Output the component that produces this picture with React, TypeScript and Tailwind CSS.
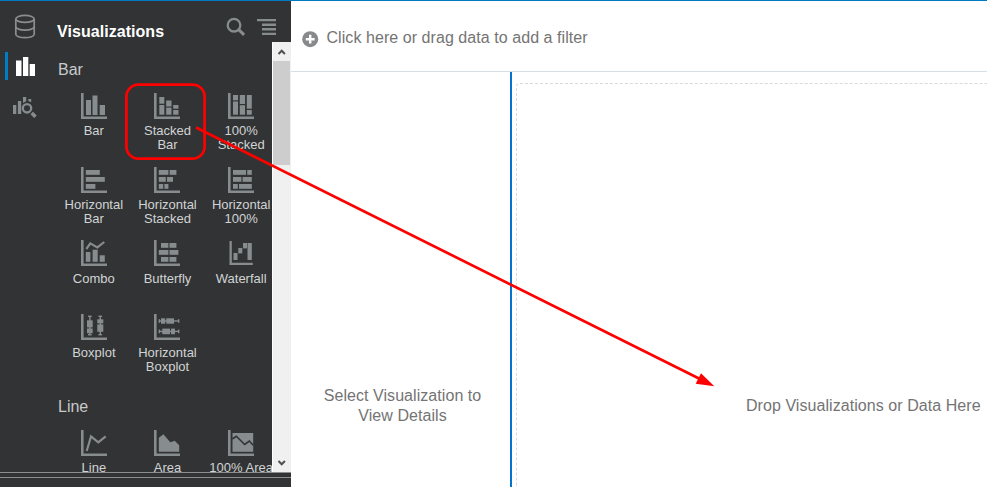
import React from "react";

type Rect = [number, number, number, number];

interface Viz {
  label: string[];
  bars?: Rect[];
  line?: string;
  area?: string;
  cut?: string;
  small?: boolean;
}

// Each bar is [left, top, right, bottom] in a 26-unit square.
const barCharts: Viz[] = [
  { label: ["Bar"], bars: [[5, 7, 10, 22], [11.5, 2.5, 16.5, 22], [18.7, 12, 24, 22]] },
  {
    label: ["Stacked", "Bar"],
    bars: [[5.3, 4, 10.3, 10.7], [5.3, 12, 10.3, 21.7], [12.2, 7.5, 17.5, 13.5], [12.2, 14.6, 17.5, 21.7], [19.2, 12, 24.5, 15.7], [19.2, 17, 24.5, 21.7]],
  },
  {
    label: ["100%", "Stacked"],
    bars: [[5, 2, 10, 7.3], [5, 8.5, 10, 21.7], [11.8, 2, 17, 11], [11.8, 12.2, 17, 21.7], [18.8, 2, 23.8, 15.7], [18.8, 17, 23.8, 21.7]],
  },
  { label: ["Horizontal", "Bar"], bars: [[4.8, 3, 18.8, 7.8], [4.8, 10, 23.8, 14.8], [4.8, 17, 14.4, 21.8]] },
  {
    label: ["Horizontal", "Stacked"],
    bars: [[4.8, 3, 14.4, 7.8], [15.6, 3, 22.4, 7.8], [4.8, 10, 11.8, 14.8], [13, 10, 19, 14.8], [4.8, 17, 9.2, 21.8], [10.4, 17, 14.4, 21.8]],
  },
  {
    label: ["Horizontal", "100%"],
    bars: [[5, 3, 18, 7.8], [19.2, 3, 23.8, 7.8], [5, 10, 13.4, 14.8], [14.6, 10, 23.8, 14.8], [5, 17, 9.8, 21.8], [11, 17, 23.8, 21.8]],
  },
  {
    label: ["Combo"],
    bars: [[4.8, 12, 9.4, 21.8], [11.6, 9.7, 16.7, 21.8], [18.7, 15.3, 23.8, 21.8]],
    line: "5.3,9 9.3,3.4 16.3,7.4 23.3,2",
  },
  {
    label: ["Butterfly"],
    bars: [[7, 3, 14.4, 7.8], [15.5, 3, 22.4, 7.8], [4.8, 10, 14.4, 14.8], [15.5, 10, 24.4, 14.8], [7, 17, 14.4, 21.8], [15.5, 17, 22.4, 21.8]],
  },
  {
    label: ["Waterfall"],
    bars: [[5.5, 13, 9.5, 20], [10.3, 8, 14.3, 13.4], [15, 3, 19, 8.4], [19.5, 3, 23.8, 20]],
    small: true,
  },
  {
    label: ["Boxplot"],
    bars: [
      [6, 6.3, 11.7, 13.4], [6, 14.5, 11.7, 19.2], [8.2, 2, 9.6, 21], [7, 1.6, 10.7, 3], [7, 20, 10.7, 21.4],
      [16.3, 5.3, 22.3, 9.3], [16.3, 10.4, 22.3, 17.8], [18.6, 2, 20, 21], [17.4, 1.6, 21.1, 3], [17.4, 20, 21.1, 21.4],
    ],
  },
  {
    label: ["Horizontal", "Boxplot"],
    bars: [
      [7, 4.3, 11.2, 9.7], [12.3, 4.3, 20, 9.7], [5, 6.3, 25, 7.7], [4.6, 5.2, 6, 8.8], [24, 5.2, 25.4, 8.8],
      [8.3, 14.6, 16, 20.2], [17, 14.6, 21, 20.2], [5, 16.7, 25, 18.1], [4.6, 15.6, 6, 19.2], [24, 15.6, 25.4, 19.2],
    ],
  },
];

const lineCharts: Viz[] = [
  { label: ["Line"], line: "5.7,21 10,6.4 17.3,12.3 24.7,6.3" },
  { label: ["Area"], area: "4.8,21.8 4.8,7.8 9.4,4.2 16.3,12.2 20.7,10.7 25.2,15.3 25.2,21.8" },
  { label: ["100% Area"], area: "4.5,3 25.2,3 25.2,21.8 4.5,21.8", cut: "4.3,9 8.3,6.3 16.7,14.5 21.3,11 25.2,15.3" },
];

function ChartIcon({ viz }: { viz: Viz }) {
  return (
    <svg width="26" height="26" viewBox="0 0 26 26" className="block shrink-0 fill-[#878c8f]">
      <path d={viz.small ? "M1.5 1h2.3v21.7h21V25H1.5z" : "M0 0h2.6v23.6H26V26H0z"} />
      {viz.bars?.map(([l, t, r, b], i) => (
        <rect key={i} x={l} y={t} width={r - l} height={b - t} />
      ))}
      {viz.area && <polygon points={viz.area} />}
      {viz.line && <polyline points={viz.line} className="fill-none stroke-[#878c8f]" strokeWidth="2.2" />}
      {viz.cut && <polyline points={viz.cut} className="fill-none stroke-[#313335]" strokeWidth="1.6" />}
    </svg>
  );
}

function VizGrid({ items }: { items: Viz[] }) {
  return (
    <div className="grid w-[221px] shrink-0 auto-rows-[74px] grid-cols-3">
      {items.map((viz, i) => (
        <div key={viz.label.join(" ")} className="flex flex-col items-center">
          <div className={i >= 6 ? "-mt-px pb-1.5" : "pb-[5px]"}>
            <ChartIcon viz={viz} />
          </div>
          <div className="text-center text-[13px] leading-[14px] whitespace-nowrap text-[#d2d3d4]">
            {viz.label.map((l) => (
              <div key={l}>{l}</div>
            ))}
          </div>
        </div>
      ))}
    </div>
  );
}

function Rail() {
  return (
    <nav className="flex w-[57px] shrink-0 flex-col">
      <svg width="22" height="25" viewBox="0 0 22 25" className="mt-[13px] ml-[14px] fill-none stroke-[#8a8e91]" strokeWidth="1.7">
        <ellipse cx="11" cy="4.9" rx="9.2" ry="3.5" />
        <path d="M1.8 4.9v15.3c0 2 4.1 3.5 9.2 3.5s9.2-1.5 9.2-3.5V4.9M1.8 12.6c0 2 4.1 3.5 9.2 3.5s9.2-1.5 9.2-3.5" />
      </svg>
      <div className="mt-[13px] flex h-7 items-center pl-[5px]">
        <div className="h-7 w-[3px] bg-[#007dc6]" />
        <svg width="20" height="20" viewBox="0 0 20 20" className="ml-2 fill-white">
          <path d="M0 4.5h5.5V20H0zM7 1h5.3v19H7zM13.7 8H19v12h-5.3z" />
        </svg>
      </div>
      <svg width="24" height="22" viewBox="0 0 24 22" className="mt-4 ml-[13px] fill-[#878c8f]">
        <path d="M0 9h3.3v9H0zM4.9 5h3.3v13H4.9zM10 1h3.2v4.2L10 7zM15.3 3h2.9v3.2l-2.9-1.1z" />
        <circle cx="14" cy="12.3" r="4.2" className="fill-none stroke-[#878c8f]" strokeWidth="2.3" />
        <path d="m18.7 17 3.8 3.8" className="stroke-[#878c8f]" strokeWidth="3.6" />
      </svg>
    </nav>
  );
}

function ScrollBar() {
  return (
    <div className="flex w-[19px] shrink-0 flex-col border-l border-white bg-[#f0f0f0]">
      <svg width="18" height="19" viewBox="0 0 18 19" className="shrink-0 fill-none stroke-[#505050]" strokeWidth="2">
        <path d="m5.5 12 3.2-3.3 3.2 3.3" />
      </svg>
      <div className="h-[104px] w-[17px] bg-[#cdcdcd]" />
      <div className="grow" />
      <svg width="18" height="19" viewBox="0 0 18 19" className="shrink-0 fill-none stroke-[#505050]" strokeWidth="2">
        <path d="m5.5 8 3.2 3.3L11.9 8" />
      </svg>
    </div>
  );
}

function Sidebar() {
  return (
    <aside className="flex w-[291px] shrink-0 flex-col bg-[#313335]">
      <div className="flex h-[471px] shrink-0 overflow-hidden">
        <Rail />
        <div className="flex min-w-0 grow flex-col">
          <header className="flex h-[41px] shrink-0 items-start">
            <h1 className="mt-[19px] w-[169px] text-base leading-6 font-bold tracking-[0.05px] text-white">Visualizations</h1>
            <svg width="20" height="20" viewBox="0 0 20 20" className="mt-4 fill-none stroke-[#878c8f]">
              <circle cx="8" cy="8.2" r="6.3" strokeWidth="2.3" />
              <path d="m12.7 12.7 5.4 5.2" strokeWidth="3" />
            </svg>
            <svg width="19" height="17" viewBox="0 0 19 17" className="mt-[18px] ml-[11px] fill-[#878c8f]">
              <path d="M0 0h19v2.3H0zM5 4.5h14v2.4H5zM5 9.1h14v2.4H5zM5 13.7h14V16H5z" />
            </svg>
          </header>
          <div className="flex min-h-0 grow">
            <div className="flex w-[215px] shrink-0 flex-col overflow-hidden">
              <h2 className="mt-4 mb-[11px] ml-px text-base leading-6 text-[#c8cacb]">Bar</h2>
              <VizGrid items={barCharts} />
              <h2 className="mt-[6px] mb-[11px] ml-px text-base leading-6 text-[#c8cacb]">Line</h2>
              <VizGrid items={lineCharts} />
            </div>
            <ScrollBar />
          </div>
        </div>
      </div>
      <div className="h-[6px] shrink-0 border-y border-[#8c8e90]" />
    </aside>
  );
}

export default function App() {
  return (
    <div className="relative flex h-[487px] w-[987px] flex-col overflow-hidden bg-white font-['Liberation_Sans',Arial,sans-serif]">
      <div className="h-px shrink-0 bg-[#007ac2]" />
      <div className="flex min-h-0 grow">
        <Sidebar />
        <main className="flex min-w-0 grow flex-col text-base tracking-[0.06px] text-[#747474]">
          <div className="flex h-[71px] shrink-0 items-start border-b border-[#d4dfe6] pl-[11px]">
            <svg width="17" height="17" viewBox="0 0 17 17" className="mt-[30px]">
              <circle cx="8.2" cy="8.2" r="8" className="fill-[#878a8c]" />
              <path d="M8.2 3.8v8.8M3.8 8.2h8.8" className="stroke-white" strokeWidth="2.4" />
            </svg>
            <span className="mt-[25px] ml-[7.5px] leading-6">Click here or drag data to add a filter</span>
          </div>
          <div className="flex min-h-0 grow">
            <section className="w-[219px] shrink-0 pt-[314px] pr-1 pl-2 text-center leading-5">
              Select Visualization to
              <br />
              View Details
            </section>
            <section className="min-w-0 grow border-l-2 border-[#0572ce] pt-[11px] pl-1">
              <div className="h-full rounded-tl-[4px] border-t border-l border-dashed border-[#d9d9d9] pt-[310px] pl-[229px] leading-6 whitespace-nowrap">
                Drop Visualizations or Data Here
              </div>
            </section>
          </div>
        </main>
      </div>
      <svg width="987" height="487" viewBox="0 0 987 487" className="pointer-events-none absolute inset-0 fill-none stroke-[#ff0000]" strokeWidth="2.7">
        <rect x="126.4" y="84.6" width="78.2" height="74" rx="12" />
        <path d="M196 127.5 702 380" />
        <path d="M714.3 386.2 701 373.2 695.7 383.8z" className="fill-[#ff0000] stroke-none" />
      </svg>
    </div>
  );
}
